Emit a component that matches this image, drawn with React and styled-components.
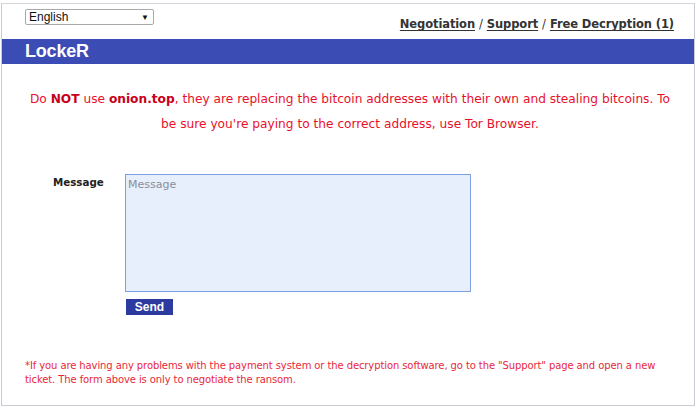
import React from "react";
import styled, { createGlobalStyle } from "styled-components";

const Global = createGlobalStyle`
  html, body { margin: 0; padding: 0; background: #fff; }
  body { font-family: "DejaVu Sans", Verdana, sans-serif; }
`;

const Frame = styled.div`
  margin: 3px 0 0 1px;
  width: 694px;
  height: 403px;
  box-sizing: border-box;
  border: 1px solid #c9cad3;
  border-top-color: #d4d4dc;
  display: flex;
  flex-direction: column;
`;

const TopRow = styled.div`
  height: 35px;
  display: flex;
  align-items: flex-start;
  justify-content: space-between;
  padding: 5px 20px 0 23px;
  box-sizing: border-box;
`;

const LangSelect = styled.div`
  width: 129px;
  height: 16px;
  box-sizing: border-box;
  border: 1px solid #a9a9a9;
  border-radius: 2px;
  background: #fff;
  display: flex;
  align-items: center;
  justify-content: space-between;
  padding: 0 4px 0 3px;
  font-family: "Liberation Sans", Arial, sans-serif;
  font-size: 12px;
  color: #111;
`;

const Arrow = styled.span`
  font-size: 8px;
  color: #111;
`;

const Nav = styled.nav`
  margin-top: 8px;
  font-family: "DejaVu Sans", Verdana, sans-serif;
  font-weight: bold;
  font-size: 11.5px;
  color: #333;
  letter-spacing: -0.1px;
`;

const NavLink = styled.a`
  color: #333;
  text-decoration: underline;
  text-underline-offset: 2px;
`;

const Sep = styled.span`
  font-weight: normal;
  margin: 0 4px;
`;

const Bar = styled.div`
  height: 25px;
  background: #3b4cb5;
  display: flex;
  align-items: center;
  padding-left: 23px;
`;

const Brand = styled.h1`
  margin: 0;
  font-family: "Liberation Sans", Arial, sans-serif;
  font-weight: bold;
  font-size: 18px;
  color: #fff;
  letter-spacing: -0.2px;
`;

const Warning = styled.p`
  margin: 23px 22px 0 26px;
  text-align: center;
  color: #e8102a;
  font-family: "DejaVu Sans", Tahoma, sans-serif;
  font-size: 12.2px;
  line-height: 25px;
`;

const Strong = styled.b`
  color: #c8001a;
`;

const FormRow = styled.div`
  display: flex;
  margin-top: 37px;
  padding-left: 51px;
`;

const Label = styled.label`
  width: 72px;
  padding-top: 2px;
  font-family: "DejaVu Sans", Verdana, sans-serif;
  font-weight: bold;
  font-size: 10.3px;
  color: #222;
`;

const FieldCol = styled.div`
  display: flex;
  flex-direction: column;
  gap: 7px;
`;

const Area = styled.textarea`
  width: 346px;
  height: 118px;
  box-sizing: border-box;
  margin: 0;
  background: #e7eefc;
  border: 1px solid #7e9fe2;
  padding: 3px 2px;
  resize: none;
  outline: none;
  font-family: "DejaVu Sans", Tahoma, sans-serif;
  font-size: 11px;
  color: #333;
  &::placeholder { color: #8a8e99; }
`;

const SendButton = styled.button`
  width: 47px;
  height: 16px;
  margin-left: 1px;
  padding: 0;
  border: none;
  background: #2d3a9f;
  color: #fff;
  font-family: "Liberation Sans", Arial, sans-serif;
  font-weight: bold;
  font-size: 12px;
  line-height: 16px;
`;

const Footer = styled.p`
  margin: 44px 30px 0 23px;
  color: #e8283a;
  font-family: "DejaVu Sans", Tahoma, sans-serif;
  font-size: 10px;
  line-height: 14px;
  letter-spacing: -0.1px;
`;

export default function App() {
  return (
    <>
      <Global />
      <Frame>
        <TopRow>
          <LangSelect>
            <span>English</span>
            <Arrow>▼</Arrow>
          </LangSelect>
          <Nav>
            <NavLink>Negotiation</NavLink>
            <Sep>/</Sep>
            <NavLink>Support</NavLink>
            <Sep>/</Sep>
            <NavLink>Free Decryption (1)</NavLink>
          </Nav>
        </TopRow>
        <Bar>
          <Brand>LockeR</Brand>
        </Bar>
        <Warning>
          Do <Strong>NOT</Strong> use <Strong>onion.top</Strong>, they are replacing the bitcoin addresses with their own and stealing bitcoins. To be sure you're paying to the correct address, use Tor Browser.
        </Warning>
        <FormRow>
          <Label>Message</Label>
          <FieldCol>
            <Area placeholder="Message" />
            <SendButton>Send</SendButton>
          </FieldCol>
        </FormRow>
        <Footer>
          *If you are having any problems with the payment system or the decryption software, go to the "Support" page and open a new ticket. The form above is only to negotiate the ransom.
        </Footer>
      </Frame>
    </>
  );
}
